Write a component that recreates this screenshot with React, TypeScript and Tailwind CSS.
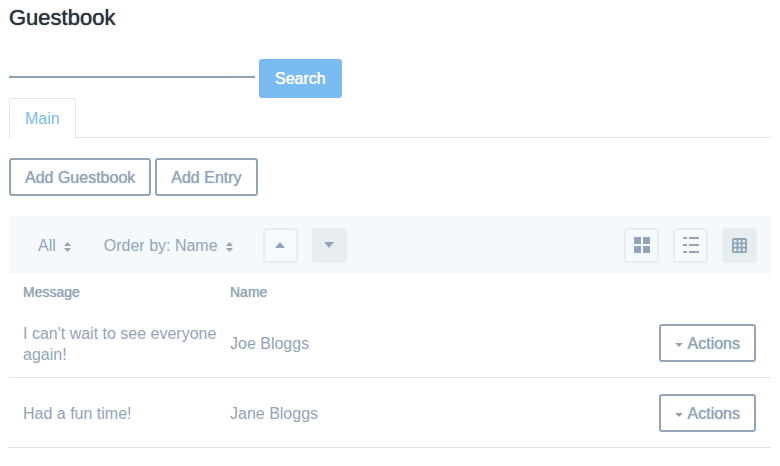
import type { ReactNode } from 'react';

const medium = '[text-shadow:0_0_1px_currentColor]';

const entries = [
  { message: "I can't wait to see everyone again!", name: 'Joe Bloggs' },
  { message: 'Had a fun time!', name: 'Jane Bloggs' },
];

function OutlineButton({ children }: { children: ReactNode }) {
  return (
    <button
      type="button"
      className={`inline-flex h-[38px] items-center rounded-[3px] border-2 border-[#92a5b8] bg-white px-[14px] whitespace-nowrap ${medium}`}
    >
      {children}
    </button>
  );
}

function IconButton({ label, active, children }: { label: string; active?: boolean; children: ReactNode }) {
  return (
    <button
      type="button"
      aria-label={label}
      aria-pressed={!!active}
      className={`flex size-[35px] items-center justify-center rounded-[4px] border-2 border-[#e7ecef] ${active ? 'bg-[#e7ecef]' : 'bg-[#f7fafc]'}`}
    >
      {children}
    </button>
  );
}

function ToolbarSelect({ label, options }: { label: string; options: string[] }) {
  return (
    <div className="flex items-center">
      <select aria-label={label} className="-mr-2 field-sizing-content appearance-none bg-transparent pt-0.5 pr-4 leading-6">
        {options.map((o) => (
          <option key={o}>{o}</option>
        ))}
      </select>
      <svg width="7" height="10" viewBox="0 0 7 10" fill="currentColor" className="pointer-events-none mt-[3px]" aria-hidden="true">
        <path d="M0 4 3.5 0 7 4zM0 6h7L3.5 10z" />
      </svg>
    </div>
  );
}

export default function App() {
  return (
    <main className="px-[9px] pt-1 font-['Liberation_Sans',Arial,sans-serif] text-[16px] leading-[21px] text-[#92a5b8]">
      <h1 className={`text-[22px] leading-7 text-[#29323d] ${medium}`}>Guestbook</h1>

      <form className="mt-[27px] flex items-start gap-1" onSubmit={(e) => e.preventDefault()}>
        <input
          type="text"
          aria-label="Search entries"
          className="h-[19px] w-[246px] border-b-2 border-[#8ea5b7] bg-transparent outline-none"
        />
        <button type="submit" className={`h-[39px] rounded-[3px] bg-[#7abbf2] px-4 text-white ${medium}`}>
          Search
        </button>
      </form>

      <nav className="flex border-b border-[#e3e5e6]">
        <a href="#main" className="-mb-px rounded-t-[3px] border border-b-0 border-[#e3e5e6] bg-white px-[15px] py-[9px] text-[#7abbf2]">
          Main
        </a>
      </nav>

      <div className="mt-5 flex gap-1">
        <OutlineButton>Add Guestbook</OutlineButton>
        <OutlineButton>Add Entry</OutlineButton>
      </div>

      <div className="mt-5 flex h-[58px] items-center justify-between bg-[#f5f9fc] pr-[14px] pl-[29px]">
        <div className="flex items-center">
          <ToolbarSelect label="Filter" options={['All']} />
          <div className="ml-[33px]">
            <ToolbarSelect label="Sort field" options={['Order by: Name', 'Order by: Message']} />
          </div>
          <div className="ml-[30px] flex gap-[14px]">
            <IconButton label="Ascending">
              <svg width="10" height="6" viewBox="0 0 10 6" fill="currentColor" aria-hidden="true">
                <path d="M0 6 5 0l5 6z" />
              </svg>
            </IconButton>
            <IconButton label="Descending" active>
              <svg width="10" height="6" viewBox="0 0 10 6" fill="currentColor" aria-hidden="true">
                <path d="M0 0h10L5 6z" />
              </svg>
            </IconButton>
          </div>
        </div>
        <div className="flex gap-[14px]">
          <IconButton label="Grid view">
            <svg width="16" height="16" viewBox="0 0 16 16" fill="currentColor" aria-hidden="true">
              <path d="M0 0h7v7H0zM9 0h7v7H9zM0 9h7v7H0zM9 9h7v7H9z" />
            </svg>
          </IconButton>
          <IconButton label="List view">
            <svg width="16" height="16" viewBox="0 0 16 16" fill="currentColor" aria-hidden="true">
              <path d="M0 0h4v2H0zM6 0h10v2H6zM0 7h4v2H0zM6 7h10v2H6zM0 14h4v2H0zM6 14h10v2H6z" />
            </svg>
          </IconButton>
          <IconButton label="Table view" active>
            <svg width="15" height="15" viewBox="0 0 16 16" fill="none" stroke="currentColor" strokeWidth="2" aria-hidden="true">
              <rect x="1" y="1" width="14" height="14" rx="1" />
              <path d="M5.7 1v14M10.3 1v14M1 5.7h14M1 10.3h14" />
            </svg>
          </IconButton>
        </div>
      </div>

      <table className="w-full table-fixed text-left">
        <thead>
          <tr className={`text-[14px] leading-5 ${medium}`}>
            <th scope="col" className="w-[213px] pt-2 pb-[6px] pl-[14px] font-normal">Message</th>
            <th scope="col" className="pt-2 pb-[6px] pl-2 font-normal">Name</th>
            <th className="w-32" />
          </tr>
        </thead>
        <tbody>
          {entries.map((e) => (
            <tr key={e.name} className="border-b border-[#e0e2e3]">
              <td className="pt-0.5 pl-[14px]">{e.message}</td>
              <td className="pt-0.5 pl-2">{e.name}</td>
              <td className="pt-4 pr-[15px] pb-[15px]">
                <div className="flex justify-end">
                  <OutlineButton>
                    <svg width="8" height="4" viewBox="0 0 8 4" fill="currentColor" className="mt-[3px] mr-[5px]" aria-hidden="true">
                      <path d="M0 0h8L4 4z" />
                    </svg>
                    Actions
                  </OutlineButton>
                </div>
              </td>
            </tr>
          ))}
        </tbody>
      </table>
    </main>
  );
}
